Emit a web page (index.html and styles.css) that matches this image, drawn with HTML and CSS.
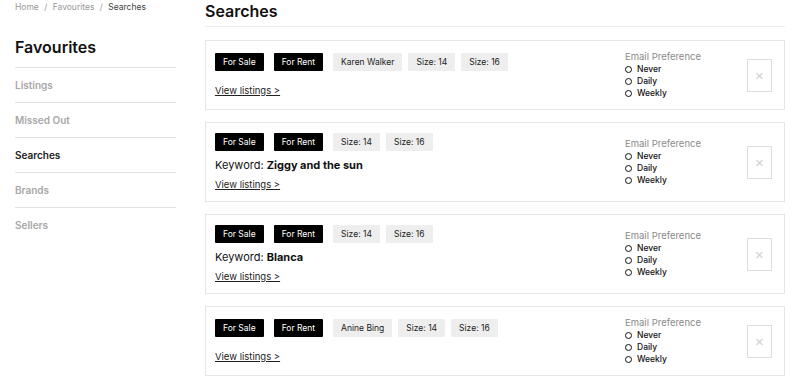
FILE: index.html
```html
<!DOCTYPE html>
<html lang="en">
<head>
    <meta charset="UTF-8">
    <meta name="viewport" content="width=device-width, initial-scale=1.0">
    <title>Favourites - Searches</title>
    <link rel="stylesheet" href="styles.css">
</head>
<body>
    <div class="page">
        <aside class="sidebar">
            <div class="breadcrumb">
                <a href="#">Home</a>
                <span class="sep">/</span>
                <a href="#">Favourites</a>
                <span class="sep">/</span>
                <span class="current">Searches</span>
            </div>
            <h2 class="sidebar-title">Favourites</h2>
            <nav class="side-nav">
                <a href="#">Listings</a>
                <a href="#">Missed Out</a>
                <a href="#" class="active">Searches</a>
                <a href="#">Brands</a>
                <a href="#" class="last">Sellers</a>
            </nav>
        </aside>

        <main class="content">
            <h1 class="page-title">Searches</h1>

            <div class="search-card">
                <div class="search-info">
                    <div class="chips">
                        <span class="chip dark">For Sale</span>
                        <span class="chip dark">For Rent</span>
                        <span class="chip">Karen Walker</span>
                        <span class="chip">Size: 14</span>
                        <span class="chip">Size: 16</span>
                    </div>
                    <a href="#" class="view-link">View listings &gt;</a>
                </div>
                <div class="email-pref">
                    <div class="pref-title">Email Preference</div>
                    <label class="radio"><span class="dot"></span>Never</label>
                    <label class="radio"><span class="dot"></span>Daily</label>
                    <label class="radio"><span class="dot"></span>Weekly</label>
                </div>
                <button class="remove">&times;</button>
            </div>

            <div class="search-card">
                <div class="search-info">
                    <div class="chips">
                        <span class="chip dark">For Sale</span>
                        <span class="chip dark">For Rent</span>
                        <span class="chip">Size: 14</span>
                        <span class="chip">Size: 16</span>
                    </div>
                    <div class="keyword">Keyword: <strong>Ziggy and the sun</strong></div>
                    <a href="#" class="view-link">View listings &gt;</a>
                </div>
                <div class="email-pref">
                    <div class="pref-title">Email Preference</div>
                    <label class="radio"><span class="dot"></span>Never</label>
                    <label class="radio"><span class="dot"></span>Daily</label>
                    <label class="radio"><span class="dot"></span>Weekly</label>
                </div>
                <button class="remove">&times;</button>
            </div>

            <div class="search-card">
                <div class="search-info">
                    <div class="chips">
                        <span class="chip dark">For Sale</span>
                        <span class="chip dark">For Rent</span>
                        <span class="chip">Size: 14</span>
                        <span class="chip">Size: 16</span>
                    </div>
                    <div class="keyword">Keyword: <strong>Blanca</strong></div>
                    <a href="#" class="view-link">View listings &gt;</a>
                </div>
                <div class="email-pref">
                    <div class="pref-title">Email Preference</div>
                    <label class="radio"><span class="dot"></span>Never</label>
                    <label class="radio"><span class="dot"></span>Daily</label>
                    <label class="radio"><span class="dot"></span>Weekly</label>
                </div>
                <button class="remove">&times;</button>
            </div>

            <div class="search-card">
                <div class="search-info">
                    <div class="chips">
                        <span class="chip dark">For Sale</span>
                        <span class="chip dark">For Rent</span>
                        <span class="chip">Anine Bing</span>
                        <span class="chip">Size: 14</span>
                        <span class="chip">Size: 16</span>
                    </div>
                    <a href="#" class="view-link">View listings &gt;</a>
                </div>
                <div class="email-pref">
                    <div class="pref-title">Email Preference</div>
                    <label class="radio"><span class="dot"></span>Never</label>
                    <label class="radio"><span class="dot"></span>Daily</label>
                    <label class="radio"><span class="dot"></span>Weekly</label>
                </div>
                <button class="remove">&times;</button>
            </div>
        </main>
    </div>
</body>
</html>
```

FILE: styles.css
```css
body {
    margin: 0;
    font-family: Inter, 'Noto Sans', sans-serif;
    background: #ffffff;
    color: #111;
}

a {
    color: inherit;
    text-decoration: none;
}

.page {
    display: flex;
    gap: 29px;
    padding: 0 15px;
}

/* sidebar */
.sidebar {
    width: 161px;
    flex-shrink: 0;
}

.breadcrumb {
    font-size: 8.5px;
    color: #999;
    height: 14px;
    line-height: 14px;
}

.breadcrumb .sep {
    margin: 0 3px;
}

.breadcrumb .current {
    color: #444;
}

.sidebar-title {
    font-size: 16px;
    font-weight: 600;
    margin: 24px 0 0;
    line-height: 19px;
    padding-bottom: 10px;
    border-bottom: 1px solid #e2e2e2;
}

.side-nav {
    display: flex;
    flex-direction: column;
}

.side-nav a {
    font-size: 10px;
    font-weight: 600;
    color: #a8a8a8;
    height: 34px;
    line-height: 34px;
    border-bottom: 1px solid #e2e2e2;
}

.side-nav a.active {
    color: #222;
}

.side-nav a.last {
    border-bottom: none;
}

/* main */
.content {
    flex: 1;
    display: flex;
    flex-direction: column;
    gap: 12px;
}

.page-title {
    font-size: 16px;
    font-weight: 600;
    margin: 0;
    line-height: 22px;
    padding-bottom: 4px;
    border-bottom: 1px solid #ececec;
    margin-bottom: 1px;
}

.search-card {
    display: flex;
    align-items: center;
    border: 1px solid #e6e6e6;
    padding: 10px 12px 10px 9px;
}

.search-info {
    flex: 1;
    display: flex;
    flex-direction: column;
    align-items: flex-start;
}

.chips {
    display: flex;
    gap: 6px;
}

.chip {
    font-size: 8.5px;
    line-height: 18px;
    height: 18px;
    padding: 0 8px;
    background: #eeeeee;
    color: #222;
    border-radius: 1px;
}

.chip.dark {
    background: #000;
    color: #fff;
    margin-right: 4px;
}

.keyword {
    font-size: 11px;
    line-height: 14px;
    margin-top: 7px;
}

.keyword strong {
    font-weight: 700;
}

.view-link {
    font-size: 9.5px;
    line-height: 12px;
    text-decoration: underline;
    color: #222;
    margin-top: 14px;
}

.keyword + .view-link {
    margin-top: 7px;
}

.email-pref {
    width: 122px;
    display: flex;
    flex-direction: column;
}

.pref-title {
    font-size: 9.5px;
    color: #8a8a8a;
    line-height: 12px;
}

.radio {
    display: flex;
    align-items: center;
    gap: 5px;
    font-size: 8.5px;
    font-weight: 500;
    line-height: 12px;
    color: #111;
}

.radio .dot {
    width: 5px;
    height: 5px;
    border: 1.5px solid #111;
    border-radius: 50%;
}

.remove {
    width: 25px;
    height: 33px;
    border: 1px solid #dcdcdc;
    background: #fff;
    color: #cfcfcf;
    font-size: 15px;
    font-weight: 300;
    line-height: 1;
    padding: 0;
    cursor: pointer;
}
```
